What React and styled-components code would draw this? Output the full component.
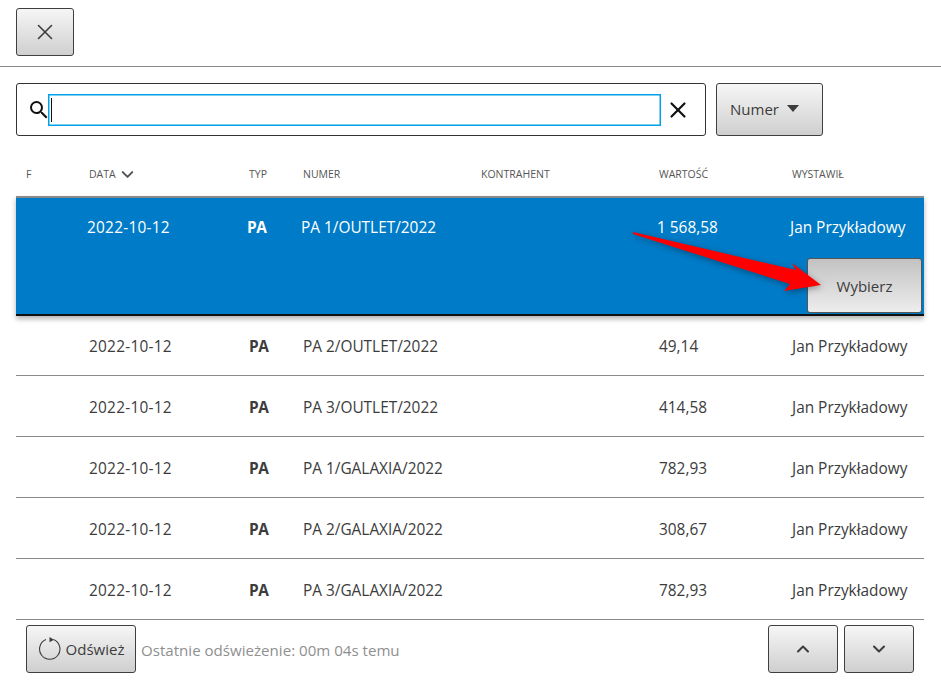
import styled, { createGlobalStyle } from 'styled-components'
import { X, ChevronDown, ChevronUp } from 'lucide-react'
import { MdSearch } from 'react-icons/md'

const COLUMNS = '73px 160px 54px 178px 178px 133px 1fr'
const SELECTED_COLUMNS = '71px 160px 54px 178px 178px 133px 1fr'

const rows = [
  { numer: 'PA 2/OUTLET/2022', wartosc: '49,14' },
  { numer: 'PA 3/OUTLET/2022', wartosc: '414,58' },
  { numer: 'PA 1/GALAXIA/2022', wartosc: '782,93' },
  { numer: 'PA 2/GALAXIA/2022', wartosc: '308,67' },
  { numer: 'PA 3/GALAXIA/2022', wartosc: '782,93' },
]

const GlobalStyle = createGlobalStyle`
  html, body {
    margin: 0;
    background: #fff;
    font-family: 'Open Sans', 'Noto Sans', sans-serif;
    color: #3c3c3c;
  }
`

const Page = styled.div`
  position: relative;
  width: 941px;
  height: 686px;
  overflow: hidden;
`

const Toolbar = styled.div`
  height: 67px;
  padding: 8px 16px 0;
  box-sizing: border-box;
  border-bottom: 1px solid #8a8a8a;
`

const Button = styled.button`
  display: flex;
  align-items: center;
  justify-content: center;
  box-sizing: border-box;
  width: ${({ $w }) => $w}px;
  height: ${({ $h }) => $h || 48}px;
  padding: 0;
  border: 1px solid #3f3f3f;
  border-radius: 3px;
  background: linear-gradient(#f6f6f6, #cfcfcf);
  font-family: inherit;
  font-size: 15px;
  color: #3c3c3c;
`

const SearchRow = styled.div`
  display: flex;
  gap: 10px;
  padding: 16px 16px 0;
`

const SearchBox = styled.div`
  display: flex;
  align-items: center;
  box-sizing: border-box;
  width: 690px;
  height: 53px;
  padding: 0 14px 0 10px;
  border: 1px solid #333;
  border-radius: 3px;
  color: #111;
`

const SearchInput = styled.div`
  flex: 1;
  display: flex;
  align-items: center;
  box-sizing: border-box;
  height: 32px;
  margin: 0 4px 0 -3px;
  padding-left: 2px;
  border: 1px solid #00a2e8;
  box-shadow: inset 0 0 0 0.5px #00a2e8;
`

const Caret = styled.span`
  width: 1px;
  height: 24px;
  background: #111;
`

const NumerButton = styled(Button)`
  padding: 0 10px 2px 0;
`

const Triangle = styled.span`
  width: 0;
  height: 0;
  margin-left: 8px;
  border-left: 6.5px solid transparent;
  border-right: 6.5px solid transparent;
  border-top: 7px solid #3c3c3c;
`

const Row = styled.div`
  display: grid;
  grid-template-columns: ${({ $selected }) => ($selected ? SELECTED_COLUMNS : COLUMNS)};
  align-items: center;
  width: 908px;
  height: 61px;
  margin-left: 16px;
  padding-top: 3px;
  box-sizing: border-box;
  font-size: 15.4px;
  border-bottom: 1px solid #8a8a8a;
`

const HeadRow = styled(Row)`
  height: 60px;
  padding-top: 16px;
  border-bottom: 0;
  font-size: 10.5px;
  color: #555;
  text-transform: uppercase;
  & > span:first-child {
    padding-left: 10px;
  }
`

const SortLabel = styled.span`
  display: flex;
  align-items: center;
  gap: 2px;
`

const SelectedRow = styled.div`
  position: relative;
  width: 908px;
  height: 120px;
  margin: 0 0 -1px 16px;
  box-sizing: border-box;
  border-top: 2px solid #8a8a8a;
  border-bottom: 2px solid #111;
  background: #007bc7;
  color: #fff;
  box-shadow: 0 3px 5px rgba(0, 0, 0, 0.3);
`

const SelectedCells = styled(Row)`
  width: auto;
  height: 60px;
  margin-left: 0;
  padding: 0 0 2px;
  border-bottom: 0;
`

const ActionRow = styled.div`
  display: flex;
  justify-content: flex-end;
  padding-right: 2px;
`

const PickButton = styled(Button)`
  background: linear-gradient(#c2c2c2, #ededed);
  border-color: #555;
`

const DateCell = styled.span`
  letter-spacing: 0.25px;
`

const Strong = styled.span`
  letter-spacing: -0.4px;
  font-weight: 700;
`

const Footer = styled.div`
  display: flex;
  align-items: center;
  gap: 5px;
  padding: 5px 27px 0 26px;
`

const RefreshButton = styled(Button)`
  gap: 4px;
`

const Status = styled.span`
  flex: 1;
  padding-top: 1px;
  font-size: 15.1px;
  color: #8f8f8f;
`

const PageButtons = styled.div`
  display: flex;
  gap: 6px;
`

const ArrowOverlay = styled.svg`
  position: absolute;
  left: 0;
  top: 0;
  pointer-events: none;
  filter: drop-shadow(1px 2px 3px rgba(0, 0, 0, 0.35));
`

export default function App() {
  return (
    <Page>
      <GlobalStyle />
      <Toolbar>
        <Button $w={58}>
          <X size={26} strokeWidth={1.5} />
        </Button>
      </Toolbar>

      <SearchRow>
        <SearchBox>
          <MdSearch size={24} />
          <SearchInput>
            <Caret />
          </SearchInput>
          <X size={26} strokeWidth={2} />
        </SearchBox>
        <NumerButton $w={107} $h={53}>
          Numer
          <Triangle />
        </NumerButton>
      </SearchRow>

      <HeadRow>
        <span>F</span>
        <SortLabel>
          Data <ChevronDown size={19} strokeWidth={2.6} />
        </SortLabel>
        <span>Typ</span>
        <span>Numer</span>
        <span>Kontrahent</span>
        <span>Wartość</span>
        <span>Wystawił</span>
      </HeadRow>

      <SelectedRow>
        <SelectedCells $selected>
          <span />
          <DateCell>2022-10-12</DateCell>
          <Strong>PA</Strong>
          <span>PA 1/OUTLET/2022</span>
          <span />
          <span>1 568,58</span>
          <span>Jan Przykładowy</span>
        </SelectedCells>
        <ActionRow>
          <PickButton $w={115} $h={55}>
            Wybierz
          </PickButton>
        </ActionRow>
      </SelectedRow>

      {rows.map((row) => (
        <Row key={row.numer}>
          <span />
          <DateCell>2022-10-12</DateCell>
          <Strong>PA</Strong>
          <span>{row.numer}</span>
          <span />
          <span>{row.wartosc}</span>
          <span>Jan Przykładowy</span>
        </Row>
      ))}

      <Footer>
        <RefreshButton $w={110}>
          <svg width="24" height="24" viewBox="0 0 24 24" fill="none">
            <path d="M8 2.6 A10.2 10.2 0 1 0 15.5 2.6" stroke="#3c3c3c" strokeWidth="1.1" />
            <path d="M11.5 0 L16 2.8 L11.5 5.2 Z" fill="#3c3c3c" />
          </svg>
          Odśwież
        </RefreshButton>
        <Status>Ostatnie odświeżenie: 00m 04s temu</Status>
        <PageButtons>
          <Button $w={70}>
            <ChevronUp size={20} strokeWidth={2.4} />
          </Button>
          <Button $w={70}>
            <ChevronDown size={20} strokeWidth={2.4} />
          </Button>
        </PageButtons>
      </Footer>

      <ArrowOverlay width="941" height="686" viewBox="0 0 941 686">
        <path d="M633 232 L796 270 L792 263 L821 285 L784 291 L790 284 L633 234 Z" fill="#ff0000" />
      </ArrowOverlay>
    </Page>
  )
}
